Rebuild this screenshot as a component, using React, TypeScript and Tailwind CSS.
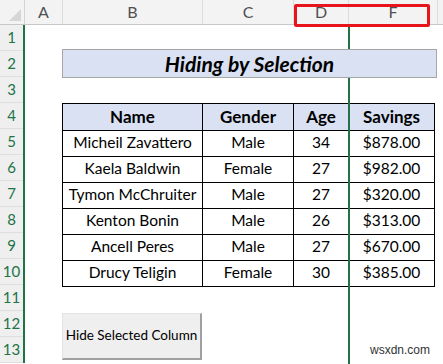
import React from "react";

const rows = [
  ["Micheil Zavattero", "Male", "34", "$878.00"],
  ["Kaela Baldwin", "Female", "27", "$982.00"],
  ["Tymon McChruiter", "Male", "27", "$320.00"],
  ["Kenton Bonin", "Male", "26", "$313.00"],
  ["Ancell Peres", "Male", "27", "$670.00"],
  ["Drucy Teligin", "Female", "30", "$385.00"],
];

const font = { fontFamily: "Lato, 'Open Sans', sans-serif" };

export default function App() {
  return (
    <div className="relative w-[443px] h-[364px] overflow-hidden bg-white" style={font}>
      {/* column header strip */}
      <div className="flex h-[25px] bg-[#f3f3f3] border-b border-[#c8c8c8] text-[16px] text-[#505050]">
        <div className="w-[25px] shrink-0 relative border-r border-[#d4d4d4]">
          <svg className="absolute right-[3px] bottom-[3px]" width="12" height="12" viewBox="0 0 12 12">
            <polygon points="12,0 12,12 0,12" fill="#d6d6d6" />
          </svg>
        </div>
        <div className="w-[38px] shrink-0 flex items-center justify-center border-r border-[#dcdcdc]">A</div>
        <div className="w-[140px] shrink-0 flex items-center justify-center border-r border-[#dcdcdc]">B</div>
        <div className="w-[91px] shrink-0 flex items-center justify-center border-r border-[#dcdcdc]">C</div>
        <div className="w-[55px] shrink-0 flex items-center justify-center border-r border-[#dcdcdc]">D</div>
        <div className="w-[89px] shrink-0 flex items-center justify-center border-r border-[#dcdcdc]">F</div>
        <div className="flex-1" />
      </div>

      <div className="flex">
        {/* row headers */}
        <div className="w-[25px] shrink-0 bg-[#efefef] border-r-2 border-[#217346] flex flex-col">
          {Array.from({ length: 13 }, (_, i) => (
            <div
              key={i}
              className="h-[26px] shrink-0 flex items-center justify-center text-[15px] text-[#217346] border-b border-[#dedede]"
            >
              {i + 1}
            </div>
          ))}
        </div>

        {/* sheet */}
        <div className="flex-1 pl-[37px] pt-[24px]">
          <div className="relative z-10 w-[375px] h-[29px] bg-[#d9e1f2] border border-[#a6a6a6] flex items-center justify-center text-[21px] font-bold italic text-black">
            Hiding by Selection
          </div>

          <table className="mt-[25px] border-collapse text-[15.5px] text-black">
            <thead>
              <tr className="h-[26px] bg-[#d9e1f2]">
                <th className="w-[140px] border border-black font-bold p-0 text-[17px]">Name</th>
                <th className="w-[91px] border border-black font-bold p-0 text-[17px]">Gender</th>
                <th className="w-[55px] border border-black font-bold p-0 text-[17px]">Age</th>
                <th className="w-[86px] border border-black font-bold p-0 text-[17px]">Savings</th>
              </tr>
            </thead>
            <tbody>
              {rows.map((r) => (
                <tr key={r[0]} className="h-[26px]">
                  {r.map((c, j) => (
                    <td key={j} className="border border-black text-center p-0 font-normal">
                      {c}
                    </td>
                  ))}
                </tr>
              ))}
            </tbody>
          </table>

          <button className="mt-[26px] w-[140px] h-[47px] bg-[#efefef] border-t border-l border-[#e3e3e3] border-r-2 border-b-2 border-r-[#a0a0a0] border-b-[#a0a0a0] text-[13.5px] text-black flex items-center justify-center whitespace-nowrap">
            Hide Selected Column
          </button>
        </div>
      </div>

      {/* hidden column double line */}
      <div className="absolute left-[348px] top-[25px] w-[2px] h-[339px] bg-[#217346]" />
      {/* selection outline */}
      <div className="absolute left-[294px] top-[4px] w-[136px] h-[23px] border-[3px] border-[#e8141b] rounded-[2px] z-20" />
      {/* watermark */}
      <div className="absolute left-[370px] top-[341px] text-[12px] text-[#333]" style={{ fontFamily: "'Liberation Sans', Arial, sans-serif" }}>
        wsxdn.com
      </div>
    </div>
  );
}
